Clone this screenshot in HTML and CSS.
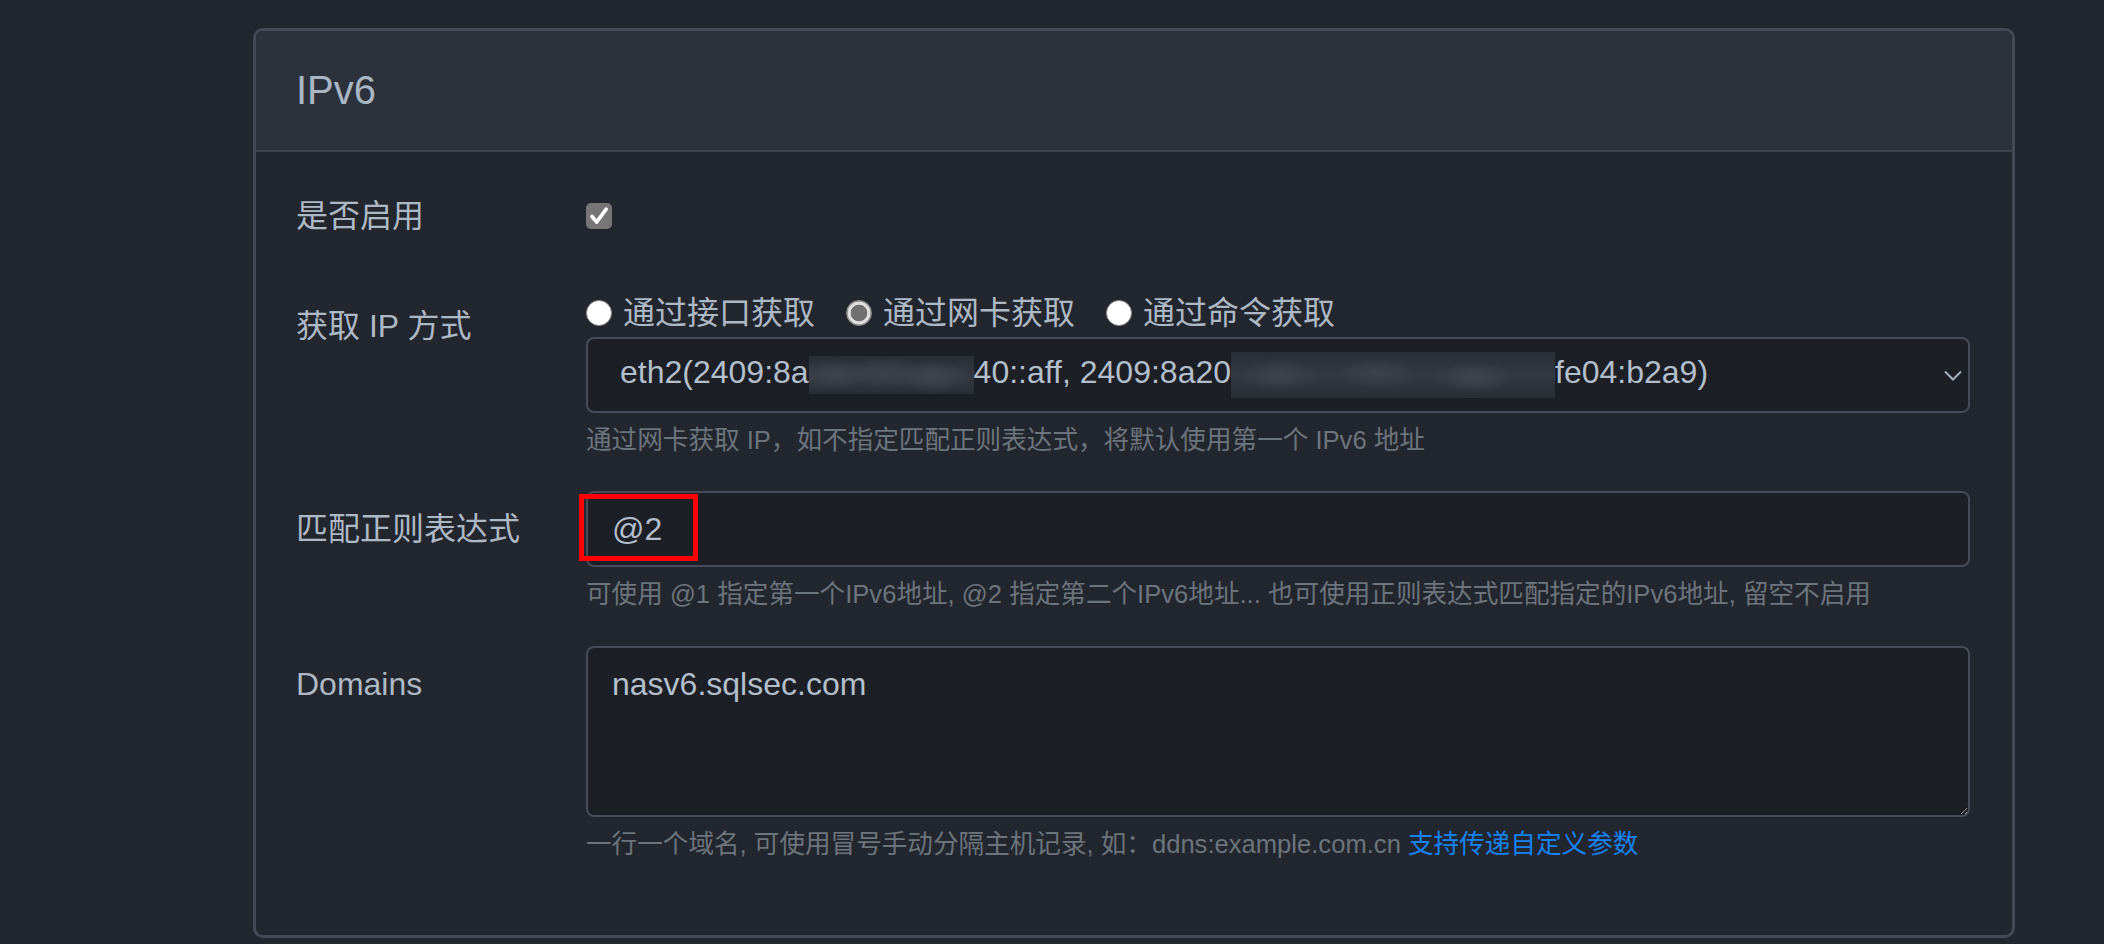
FILE: index.html
```html
<!DOCTYPE html>
<html lang="zh-CN">
<head>
<meta charset="utf-8">
<title>IPv6</title>
<link rel="stylesheet" href="styles.css">
</head>
<body>
<div class="page">
  <section class="card">
    <header class="card-header">
      <h5 class="card-title">IPv6</h5>
    </header>
    <div class="card-body">
      <div class="form-row row-enable">
        <label class="col-label plain" for="enable">是否启用</label>
        <div class="col-ctrl center">
          <input id="enable" type="checkbox" class="check" checked>
        </div>
      </div>

      <div class="form-row">
        <label class="col-label">获取 IP 方式</label>
        <div class="col-ctrl">
          <div class="radios">
            <label class="radio-item"><input type="radio" name="mode" class="radio"><span>通过接口获取</span></label>
            <label class="radio-item"><input type="radio" name="mode" class="radio" checked><span>通过网卡获取</span></label>
            <label class="radio-item"><input type="radio" name="mode" class="radio"><span>通过命令获取</span></label>
          </div>
          <div class="select" role="combobox" aria-expanded="false">
            <span class="select-text">eth2(2409:8a<span class="redact r1" aria-hidden="true"></span>40::aff, 2409:8a20<span class="redact r2" aria-hidden="true"></span>fe04:b2a9)</span>
            <svg class="chevron" width="18" height="11" viewBox="0 0 18 11"><polyline points="1,1.5 9,9.5 17,1.5" fill="none" stroke="#a3afbd" stroke-width="2"/></svg>
          </div>
          <small class="help">通过网卡获取 IP，如不指定匹配正则表达式，将默认使用第一个 IPv6 地址</small>
        </div>
      </div>

      <div class="form-row">
        <label class="col-label" for="regex">匹配正则表达式</label>
        <div class="col-ctrl">
          <div class="annot-wrap">
            <input id="regex" class="form-control" type="text" value="@2">
            <span class="red-box" aria-hidden="true"></span>
          </div>
          <small class="help">可使用 @1 指定第一个IPv6地址, @2 指定第二个IPv6地址... 也可使用正则表达式匹配指定的IPv6地址, 留空不启用</small>
        </div>
      </div>

      <div class="form-row last">
        <label class="col-label" for="domains">Domains</label>
        <div class="col-ctrl">
          <textarea id="domains" class="form-control area" rows="3">nasv6.sqlsec.com</textarea>
          <small class="help">一行一个域名, 可使用冒号手动分隔主机记录, 如：ddns:example.com.cn <a href="#" class="link">支持传递自定义参数</a></small>
        </div>
      </div>
    </div>
  </section>
</div>
</body>
</html>
```

FILE: styles.css
```css
html, body {
  margin: 0;
  background: #22262e;
}

body {
  font-family: "Liberation Sans", "Noto Sans CJK SC", sans-serif;
  color: #aeb9c6;
}

.page {
  padding: 28px 89px 5px 253px;
}

.card {
  border: 3px solid #434a55;
  border-radius: 10px;
  overflow: hidden;
  background: #22262e;
}

.card-header {
  height: 119px;
  display: flex;
  align-items: center;
  padding: 0 40px;
  background: #2c323b;
  border-bottom: 2px solid #3e454f;
}

.card-title {
  margin: 0;
  font-size: 40px;
  font-weight: 400;
  color: #a9b6c4;
}

.card-body {
  padding: 40px 42px 40px 40px;
}

.form-row {
  display: grid;
  grid-template-columns: 290px 1fr;
  margin-bottom: 32px;
}

.form-row.row-enable {
  margin-bottom: 48px;
}

.col-label {
  font-size: 32px;
  line-height: 48px;
  padding-top: 14px;
  color: #aeb9c6;
}

.col-label.plain {
  padding-top: 0;
}

.col-ctrl {
  display: flex;
  flex-direction: column;
  min-width: 0;
}

.col-ctrl.center {
  justify-content: center;
  height: 48px;
}

.check {
  appearance: none;
  -webkit-appearance: none;
  margin: 0;
  width: 26px;
  height: 26px;
  border-radius: 5px;
  background-color: #767676;
  background-image: url("data:image/svg+xml,%3Csvg xmlns='http://www.w3.org/2000/svg' viewBox='0 0 26 26'%3E%3Cpath d='M6 13.5l4.6 5.6 9.6-13' fill='none' stroke='white' stroke-width='3.6' stroke-linecap='round' stroke-linejoin='round'/%3E%3C/svg%3E");
  background-size: 26px 26px;
}

.radios {
  display: flex;
  align-items: center;
  height: 49px;
}

.radio-item {
  display: flex;
  align-items: center;
  font-size: 32px;
  line-height: 48px;
  margin-right: 31px;
  color: #aeb9c6;
}

.radio {
  appearance: none;
  -webkit-appearance: none;
  margin: 0 11px 0 0;
  width: 26px;
  height: 26px;
  border-radius: 50%;
  background: #ffffff;
  border: 1px solid #8c8c8c;
  box-sizing: border-box;
}

.radio:checked {
  background: radial-gradient(circle, #707070 0 8px, #dedede 8.6px 11px, #9a9a9a 11.6px);
  border-color: #8c8c8c;
}

.select {
  display: flex;
  align-items: center;
  height: 76px;
  box-sizing: border-box;
  border: 2px solid #454c57;
  border-radius: 8px;
  background: #1c1f26;
  padding: 0 6px 0 32px;
  font-size: 32px;
  color: #b4bfcc;
  white-space: nowrap;
}

.select-text {
  flex: 1;
  overflow: hidden;
}

.chevron {
  flex: none;
  display: block;
}

.redact {
  display: inline-block;
  vertical-align: middle;
  background-color: #30353e;
  background-image:
    radial-gradient(ellipse 40px 16px at 15% 50%, #3e444e, transparent),
    radial-gradient(ellipse 40px 16px at 45% 45%, #3c424c, transparent),
    radial-gradient(ellipse 40px 16px at 75% 55%, #3f4550, transparent),
    linear-gradient(#292d35, #343941 50%, #292d35);
}

.redact.r1 {
  width: 165px;
  height: 38px;
}

.redact.r2 {
  width: 324px;
  height: 46px;
}

.help {
  display: block;
  margin-top: 8px;
  font-size: 25.6px;
  line-height: 38.4px;
  color: #6c757d;
  white-space: nowrap;
}

.link {
  color: #1683f4;
  text-decoration: none;
}

.form-control {
  display: block;
  width: 100%;
  box-sizing: border-box;
  height: 76px;
  margin: 0;
  padding: 12px 24px;
  border: 2px solid #454c57;
  border-radius: 8px;
  background: #1c1f26;
  color: #b4bfcc;
  font-family: "Liberation Sans", "Noto Sans CJK SC", sans-serif;
  font-size: 32px;
  line-height: 48px;
  outline: none;
}

.form-control.area {
  height: 171px;
  resize: vertical;
  color-scheme: dark;
  overflow: hidden;
}

.annot-wrap {
  position: relative;
}

.red-box {
  position: absolute;
  left: -7px;
  top: 3px;
  width: 119px;
  height: 67px;
  box-sizing: border-box;
  border: 5px solid #ff0000;
  pointer-events: none;
}
```
